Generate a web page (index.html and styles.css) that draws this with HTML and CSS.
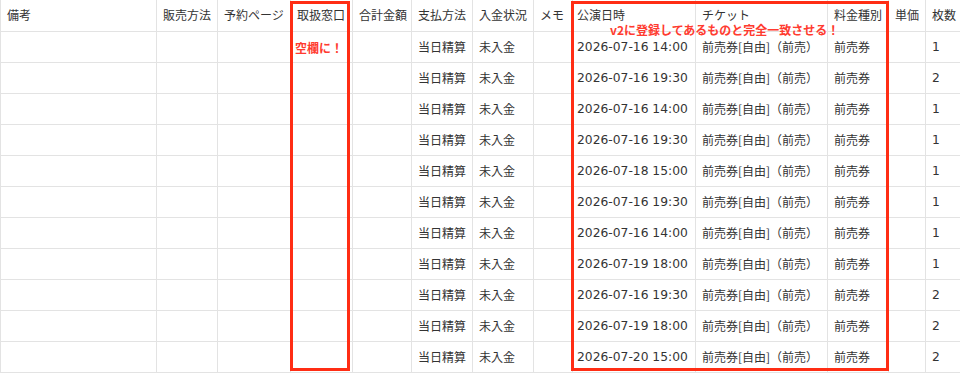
FILE: index.html
```html
<!DOCTYPE html>
<html lang="ja">
<head>
<meta charset="utf-8">
<title>予約一覧</title>
<link rel="stylesheet" href="styles.css">
</head>
<body>
<div class="sheet">
  <div class="grid">
    <div class="row head">
      <div class="c">備考</div><div class="c">販売方法</div><div class="c">予約ページ</div><div class="c">取扱窓口</div><div class="c">合計金額</div><div class="c">支払方法</div><div class="c">入金状況</div><div class="c">メモ</div><div class="c date">公演日時</div><div class="c">チケット</div><div class="c">料金種別</div><div class="c">単価</div><div class="c">枚数</div>
    </div>
    <div class="row"><div class="c"></div><div class="c"></div><div class="c"></div><div class="c"></div><div class="c"></div><div class="c">当日精算</div><div class="c">未入金</div><div class="c"></div><div class="c date num">2026-07-16 14:00</div><div class="c">前売券[自由]（前売）</div><div class="c">前売券</div><div class="c"></div><div class="c num">1</div></div>
    <div class="row"><div class="c"></div><div class="c"></div><div class="c"></div><div class="c"></div><div class="c"></div><div class="c">当日精算</div><div class="c">未入金</div><div class="c"></div><div class="c date num">2026-07-16 19:30</div><div class="c">前売券[自由]（前売）</div><div class="c">前売券</div><div class="c"></div><div class="c num">2</div></div>
    <div class="row"><div class="c"></div><div class="c"></div><div class="c"></div><div class="c"></div><div class="c"></div><div class="c">当日精算</div><div class="c">未入金</div><div class="c"></div><div class="c date num">2026-07-16 14:00</div><div class="c">前売券[自由]（前売）</div><div class="c">前売券</div><div class="c"></div><div class="c num">1</div></div>
    <div class="row"><div class="c"></div><div class="c"></div><div class="c"></div><div class="c"></div><div class="c"></div><div class="c">当日精算</div><div class="c">未入金</div><div class="c"></div><div class="c date num">2026-07-16 19:30</div><div class="c">前売券[自由]（前売）</div><div class="c">前売券</div><div class="c"></div><div class="c num">1</div></div>
    <div class="row"><div class="c"></div><div class="c"></div><div class="c"></div><div class="c"></div><div class="c"></div><div class="c">当日精算</div><div class="c">未入金</div><div class="c"></div><div class="c date num">2026-07-18 15:00</div><div class="c">前売券[自由]（前売）</div><div class="c">前売券</div><div class="c"></div><div class="c num">1</div></div>
    <div class="row"><div class="c"></div><div class="c"></div><div class="c"></div><div class="c"></div><div class="c"></div><div class="c">当日精算</div><div class="c">未入金</div><div class="c"></div><div class="c date num">2026-07-16 19:30</div><div class="c">前売券[自由]（前売）</div><div class="c">前売券</div><div class="c"></div><div class="c num">1</div></div>
    <div class="row"><div class="c"></div><div class="c"></div><div class="c"></div><div class="c"></div><div class="c"></div><div class="c">当日精算</div><div class="c">未入金</div><div class="c"></div><div class="c date num">2026-07-16 14:00</div><div class="c">前売券[自由]（前売）</div><div class="c">前売券</div><div class="c"></div><div class="c num">1</div></div>
    <div class="row"><div class="c"></div><div class="c"></div><div class="c"></div><div class="c"></div><div class="c"></div><div class="c">当日精算</div><div class="c">未入金</div><div class="c"></div><div class="c date num">2026-07-19 18:00</div><div class="c">前売券[自由]（前売）</div><div class="c">前売券</div><div class="c"></div><div class="c num">1</div></div>
    <div class="row"><div class="c"></div><div class="c"></div><div class="c"></div><div class="c"></div><div class="c"></div><div class="c">当日精算</div><div class="c">未入金</div><div class="c"></div><div class="c date num">2026-07-16 19:30</div><div class="c">前売券[自由]（前売）</div><div class="c">前売券</div><div class="c"></div><div class="c num">2</div></div>
    <div class="row"><div class="c"></div><div class="c"></div><div class="c"></div><div class="c"></div><div class="c"></div><div class="c">当日精算</div><div class="c">未入金</div><div class="c"></div><div class="c date num">2026-07-19 18:00</div><div class="c">前売券[自由]（前売）</div><div class="c">前売券</div><div class="c"></div><div class="c num">2</div></div>
    <div class="row"><div class="c"></div><div class="c"></div><div class="c"></div><div class="c"></div><div class="c"></div><div class="c">当日精算</div><div class="c">未入金</div><div class="c"></div><div class="c date num">2026-07-20 15:00</div><div class="c">前売券[自由]（前売）</div><div class="c">前売券</div><div class="c"></div><div class="c num">2</div></div>
  </div>
  <div class="mark mark-window"></div>
  <div class="mark mark-show"></div>
  <div class="note note-window">空欄に！</div>
  <div class="note note-show">v2に登録してあるものと完全一致させる！</div>
</div>
</body>
</html>
```
FILE: styles.css
```css
html, body {
  margin: 0;
  padding: 0;
  background: #ffffff;
  overflow: hidden;
}
body {
  font-family: "Noto Sans CJK JP", "Noto Sans", sans-serif;
  font-size: 12px;
  color: #333333;
}
.sheet {
  position: relative;
  width: 960px;
  height: 375px;
  overflow: hidden;
}
.grid {
  display: flex;
  flex-direction: column;
  width: 986px;
}
.row {
  display: grid;
  grid-template-columns: 157px 61px 73px 62px 59px 61px 61px 39px 123px 132px 61px 37px 60px;
  height: 31px;
}
.row.head {
  height: 32px;
}
.c {
  box-sizing: border-box;
  display: flex;
  align-items: center;
  padding: 0 6px;
  border-right: 1px solid #e3e3e3;
  border-bottom: 1px solid #e3e3e3;
  white-space: nowrap;
  overflow: hidden;
  line-height: 14px;
}
.row.head .c {
  padding-bottom: 2px;
}
.c:first-child {
  border-left: 1px solid #e3e3e3;
}
.c.date {
  padding-left: 4px;
}
.num {
  font-family: "DejaVu Sans", sans-serif;
  font-size: 12.3px;
}
.mark {
  position: absolute;
  box-sizing: border-box;
  border: 3px solid #ff2d14;
}
.mark-window {
  left: 290px;
  top: 1px;
  width: 60px;
  height: 370px;
}
.mark-show {
  left: 571px;
  top: 1px;
  width: 318px;
  height: 370px;
}
.note {
  position: absolute;
  color: #ff3b30;
  font-weight: 700;
  font-size: 12px;
  line-height: 12px;
  white-space: nowrap;
}
.note-window {
  left: 295px;
  top: 42px;
}
.note-show {
  left: 610px;
  top: 24px;
}
```
